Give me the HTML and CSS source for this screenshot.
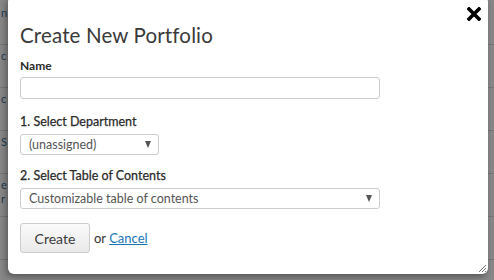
FILE: index.html
```html
<!DOCTYPE html>
<html lang="en">
<head>
    <meta charset="UTF-8">
    <title>Create New Portfolio</title>
    <link rel="stylesheet" href="styles.css">
</head>
<body>
    <!-- page behind the modal -->
    <div class="page">
        <div class="row">n</div>
        <div class="row">c</div>
        <div class="row">c</div>
        <div class="row">S</div>
        <div class="row">e<br>r</div>
        <div class="row"></div>
    </div>
    <div class="overlay"></div>

    <div class="dialog">
        <button class="close" title="Close">
            <svg width="14" height="14" viewBox="0 0 14 14"><path d="M2 2 L12 12 M12 2 L2 12" stroke="#000" stroke-width="3.6" stroke-linecap="square"/></svg>
        </button>

        <h1>Create New Portfolio</h1>

        <form class="form">
            <div class="field first">
                <label for="name" class="strong">Name</label>
                <input type="text" id="name" class="text-input">
            </div>
            <div class="field">
                <label for="dept">1. Select Department</label>
                <div class="select small" id="dept">
                    <span>(unassigned)</span>
                    <i class="caret"></i>
                </div>
            </div>
            <div class="field">
                <label for="toc">2. Select Table of Contents</label>
                <div class="select wide" id="toc">
                    <span>Customizable table of contents</span>
                    <i class="caret"></i>
                </div>
            </div>
            <div class="actions">
                <button type="button" class="btn">Create</button>
                <span class="or">or <a href="#">Cancel</a></span>
            </div>
        </form>

        <svg class="grip" width="10" height="10" viewBox="0 0 10 10"><path d="M9 2 L2 9 M9 5 L5 9 M9 8 L8 9" stroke="#777" stroke-width="1"/></svg>
    </div>
</body>
</html>
```

FILE: styles.css
```css
/* General Styles */
body {
    margin: 0;
    width: 494px;
    height: 280px;
    overflow: hidden;
    position: relative;
    font-family: 'Lato', 'Open Sans', sans-serif;
    color: #333;
    background-color: #fff;
}

/* Page behind */
.page {
    padding-top: 2px;
}

.row {
    height: 43px;
    border-bottom: 1px solid #ddd;
    font-size: 11px;
    line-height: 14px;
    color: #3a6f9a;
    padding: 4px 0 0 1px;
    box-sizing: border-box;
}

.overlay {
    position: absolute;
    inset: 0;
    background-color: rgba(0, 0, 0, 0.47);
}

/* Modal */
.dialog {
    position: absolute;
    left: 8px;
    top: -4px;
    width: 480px;
    height: 278px;
    background-color: #fff;
    border-radius: 6px;
    box-shadow: -2px 3px 6px rgba(0, 0, 0, 0.35);
    padding: 0 12px;
    box-sizing: border-box;
}

.close {
    position: absolute;
    top: 11px;
    right: 7px;
    width: 14px;
    height: 14px;
    padding: 0;
    border: none;
    background: none;
    cursor: pointer;
}

.close svg {
    display: block;
}

h1 {
    margin: 0;
    padding-top: 27px;
    font-size: 20.5px;
    font-weight: 400;
    line-height: 24px;
    color: #3a3a3a;
    letter-spacing: 0.15px;
}

.form {
    margin-top: 11px;
}

.field {
    margin-bottom: 13px;
}

.field.first {
    margin-bottom: 15px;
}

label {
    display: block;
    font-size: 12.5px;
    font-weight: 400;
    line-height: 16px;
    margin-bottom: 4px;
    color: #2a2a2a;
    -webkit-text-stroke: 0.25px #2a2a2a;
}

label.strong {
    font-weight: 700;
    font-size: 12px;
    -webkit-text-stroke: 0;
    margin-bottom: 3px;
}

.text-input {
    display: block;
    width: 360px;
    height: 22px;
    box-sizing: border-box;
    border: 1px solid #ccc;
    border-radius: 3px;
    margin: 0;
    padding: 2px 6px;
    font-family: inherit;
}

.select {
    display: flex;
    align-items: center;
    justify-content: space-between;
    height: 21px;
    box-sizing: border-box;
    border: 1px solid #ccc;
    border-radius: 3px;
    padding: 0 7px 0 8px;
    font-size: 12.5px;
    color: #555;
    background-color: #fff;
}

.select.small {
    width: 139px;
}

.select.wide {
    width: 360px;
}

.caret {
    width: 0;
    height: 0;
    border-left: 3.5px solid transparent;
    border-right: 3.5px solid transparent;
    border-top: 7px solid #555;
}

.actions {
    display: flex;
    align-items: center;
    margin-top: 14px;
}

.btn {
    width: 70px;
    height: 30px;
    border: 1px solid #ccc;
    border-radius: 3px;
    background: linear-gradient(#fafafa, #e9e9e9);
    font-family: inherit;
    font-size: 14px;
    color: #3a3a3a;
    cursor: pointer;
}

.or {
    margin-left: 4px;
    font-size: 13px;
    color: #333;
}

.or a {
    color: #1a75b5;
}

.grip {
    position: absolute;
    right: 1px;
    bottom: 1px;
}
```
